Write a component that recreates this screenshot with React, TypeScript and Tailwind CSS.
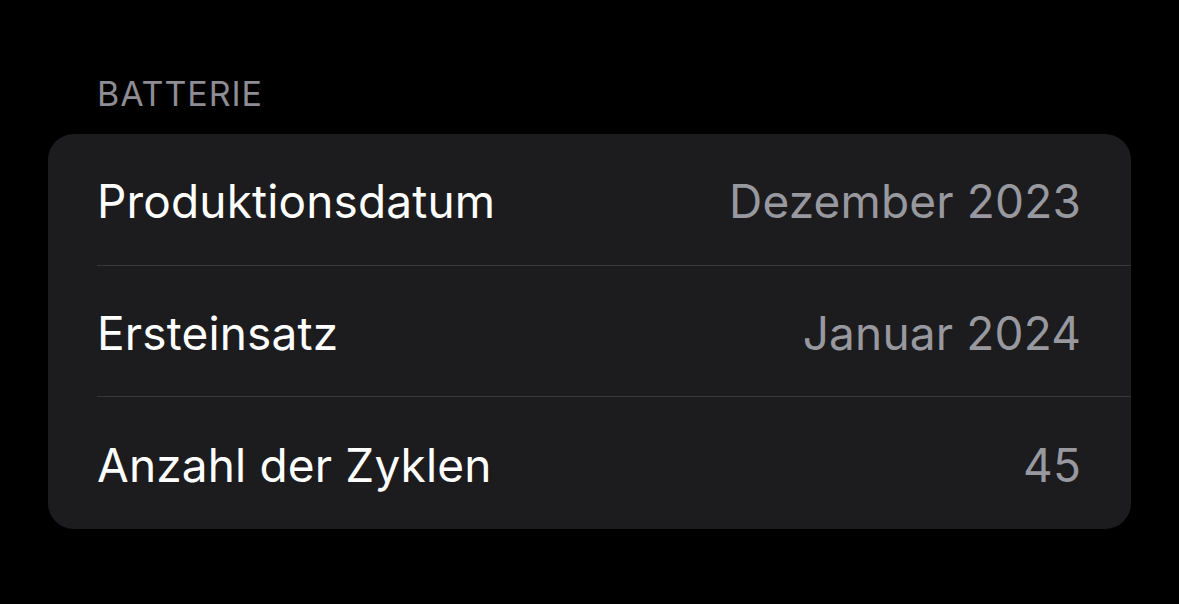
import React from "react";

const rows = [
  { label: "Produktionsdatum", value: "Dezember 2023" },
  { label: "Ersteinsatz", value: "Januar 2024" },
  { label: "Anzahl der Zyklen", value: "45" },
];

export default function App() {
  return (
    <div
      className="w-[1179px] h-[604px] bg-black pt-[74px] px-[48px]"
      style={{ fontFamily: "Inter, 'Noto Sans', sans-serif" }}
    >
      <div className="pl-[49px] text-[34px] leading-[40px] text-[#8d8d93] tracking-[0.9px]">
        BATTERIE
      </div>
      <div className="mt-[20px] bg-[#1c1c1e] rounded-[26px] overflow-hidden">
        {rows.map((r, i) => (
          <div key={r.label} className="pl-[49px]">
            <div
              className={`h-[131.7px] pt-[4px] flex items-center justify-between pr-[50px] ${
                i < rows.length - 1 ? "border-b border-[#38383a]" : ""
              }`}
            >
              <span className="text-[46px] text-white tracking-[0.15px]">{r.label}</span>
              <span className="text-[46px] text-[#98989f] tracking-[0.15px]">{r.value}</span>
            </div>
          </div>
        ))}
      </div>
    </div>
  );
}
